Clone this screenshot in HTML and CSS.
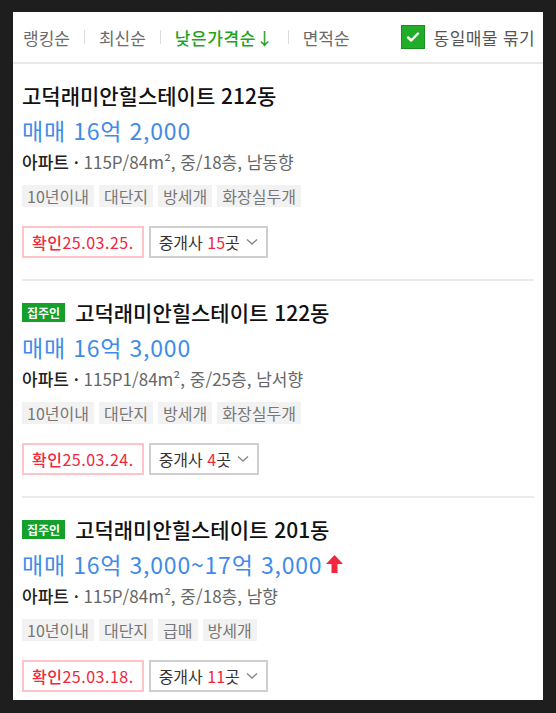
FILE: index.html
```html
<!doctype html>
<html lang="ko">
  <head>
    <meta charset="utf-8">
    <title>매물 목록</title>
    <link rel="stylesheet" href="styles.css">
  </head>
  <body>
    <div class="panel">
      <div class="sortbar">
        <ul class="sorts">
          <li>랭킹순</li>
          <li class="bar"></li>
          <li>최신순</li>
          <li class="bar"></li>
          <li class="active">낮은가격순↓</li>
          <li class="bar"></li>
          <li>면적순</li>
        </ul>
        <label class="group">
          <span class="check">
            <svg width="16" height="16" viewBox="0 0 16 16"><path d="M3 8.5l3.2 3L13 4.5" fill="none" stroke="#fff" stroke-width="2.4" stroke-linecap="round" stroke-linejoin="round"/></svg>
          </span>
          동일매물 묶기
        </label>
      </div>

      <ul class="list">
        <li class="item">
          <div class="title">고덕래미안힐스테이트 212동</div>
          <div class="price">매매 16억 2,000</div>
          <div class="info"><b>아파트 ·</b> 115P/84m², 중/18층, 남동향</div>
          <div class="tags">
            <span>10년이내</span><span>대단지</span><span>방세개</span><span>화장실두개</span>
          </div>
          <div class="actions">
            <span class="confirm"><b>확인</b>25.03.25.</span>
            <button class="broker"><span>중개사 <em>15</em>곳</span>
              <svg width="12" height="8" viewBox="0 0 12 8"><path d="M1 1.5l5 4.5 5-4.5" fill="none" stroke="#888" stroke-width="1.4"/></svg>
            </button>
          </div>
        </li>

        <li class="item">
          <div class="title"><span class="owner">집주인</span>고덕래미안힐스테이트 122동</div>
          <div class="price">매매 16억 3,000</div>
          <div class="info"><b>아파트 ·</b> 115P1/84m², 중/25층, 남서향</div>
          <div class="tags">
            <span>10년이내</span><span>대단지</span><span>방세개</span><span>화장실두개</span>
          </div>
          <div class="actions">
            <span class="confirm"><b>확인</b>25.03.24.</span>
            <button class="broker"><span>중개사 <em>4</em>곳</span>
              <svg width="12" height="8" viewBox="0 0 12 8"><path d="M1 1.5l5 4.5 5-4.5" fill="none" stroke="#888" stroke-width="1.4"/></svg>
            </button>
          </div>
        </li>

        <li class="item">
          <div class="title"><span class="owner">집주인</span>고덕래미안힐스테이트 201동</div>
          <div class="price">매매 16억 3,000~17억 3,000
            <svg class="up" width="17" height="18" viewBox="0 0 17 18"><path d="M8.5 0L17 9H11.5V18H5.5V9H0Z" fill="#f2263c"/></svg>
          </div>
          <div class="info"><b>아파트 ·</b> 115P/84m², 중/18층, 남향</div>
          <div class="tags">
            <span>10년이내</span><span>대단지</span><span>급매</span><span>방세개</span>
          </div>
          <div class="actions">
            <span class="confirm"><b>확인</b>25.03.18.</span>
            <button class="broker"><span>중개사 <em>11</em>곳</span>
              <svg width="12" height="8" viewBox="0 0 12 8"><path d="M1 1.5l5 4.5 5-4.5" fill="none" stroke="#888" stroke-width="1.4"/></svg>
            </button>
          </div>
        </li>
      </ul>
    </div>
  </body>
</html>
```

FILE: styles.css
```css
body {
  margin: 0;
  padding: 12px 13px 13px 13px;
  background: #1e1e1e;
  font-family: "Noto Sans CJK KR", "Noto Sans", sans-serif;
}

.panel {
  height: 688px;
  overflow: hidden;
  background: #fff;
}

.sortbar {
  display: flex;
  align-items: center;
  justify-content: space-between;
  height: 50px;
  padding: 0 8px 0 10px;
  border-bottom: 2px solid #e8e8e8;
}

.sorts {
  display: flex;
  align-items: center;
  gap: 14px;
  margin: 0;
  padding: 0;
  list-style: none;
  font-size: 17px;
  color: #6b6b6b;
}

.sorts .bar {
  width: 1px;
  height: 14px;
  background: #dcdcdc;
}

.sorts .active {
  color: #1fa31f;
  font-weight: 500;
  letter-spacing: 0.6px;
}

.group {
  display: flex;
  align-items: center;
  gap: 9px;
  font-size: 17px;
  letter-spacing: 0.4px;
  color: #555;
}

.check {
  display: flex;
  align-items: center;
  justify-content: center;
  width: 22px;
  height: 22px;
  background: #21ac2a;
  border: 1px solid #189020;
}

.list {
  margin: 0 9px;
  padding: 0;
  list-style: none;
}

.item {
  padding: 19px 0 21px;
  border-bottom: 2px solid #ebebeb;
}

.title {
  display: flex;
  align-items: center;
  height: 24px;
  font-size: 21px;
  font-weight: 500;
  color: #111;
}

.owner {
  margin-right: 10px;
  padding: 0 5px;
  height: 19px;
  line-height: 19px;
  font-size: 12px;
  font-weight: 700;
  color: #fff;
  background: #14a02a;
}

.price {
  display: flex;
  align-items: center;
  gap: 4px;
  margin-top: 10px;
  height: 26px;
  font-size: 23px;
  color: #3f8ce8;
  letter-spacing: 0.8px;
}

.info {
  margin-top: 9px;
  line-height: 20px;
  font-size: 17px;
  color: #666;
}

.info b {
  font-weight: 500;
  color: #222;
}

.tags {
  display: flex;
  gap: 5px;
  margin-top: 13px;
}

.tags span {
  padding: 0 5px;
  line-height: 22px;
  font-size: 16px;
  color: #777;
  background: #f2f2f2;
}

.actions {
  display: flex;
  gap: 5px;
  margin-top: 19px;
}

.confirm {
  display: flex;
  align-items: center;
  height: 28px;
  padding: 0 8px;
  border: 2px solid #ffc4c8;
  font-size: 16px;
  letter-spacing: 0.5px;
  color: #f2263c;
}

.confirm b {
  font-weight: 500;
}

.broker {
  display: flex;
  align-items: center;
  gap: 6px;
  height: 32px;
  padding: 0 8px 0 8px;
  border: 2px solid #cfcfcf;
  background: #fff;
  font-family: inherit;
  font-size: 16px;
  color: #333;
}

.broker em {
  font-style: normal;
  color: #f2263c;
}
```
